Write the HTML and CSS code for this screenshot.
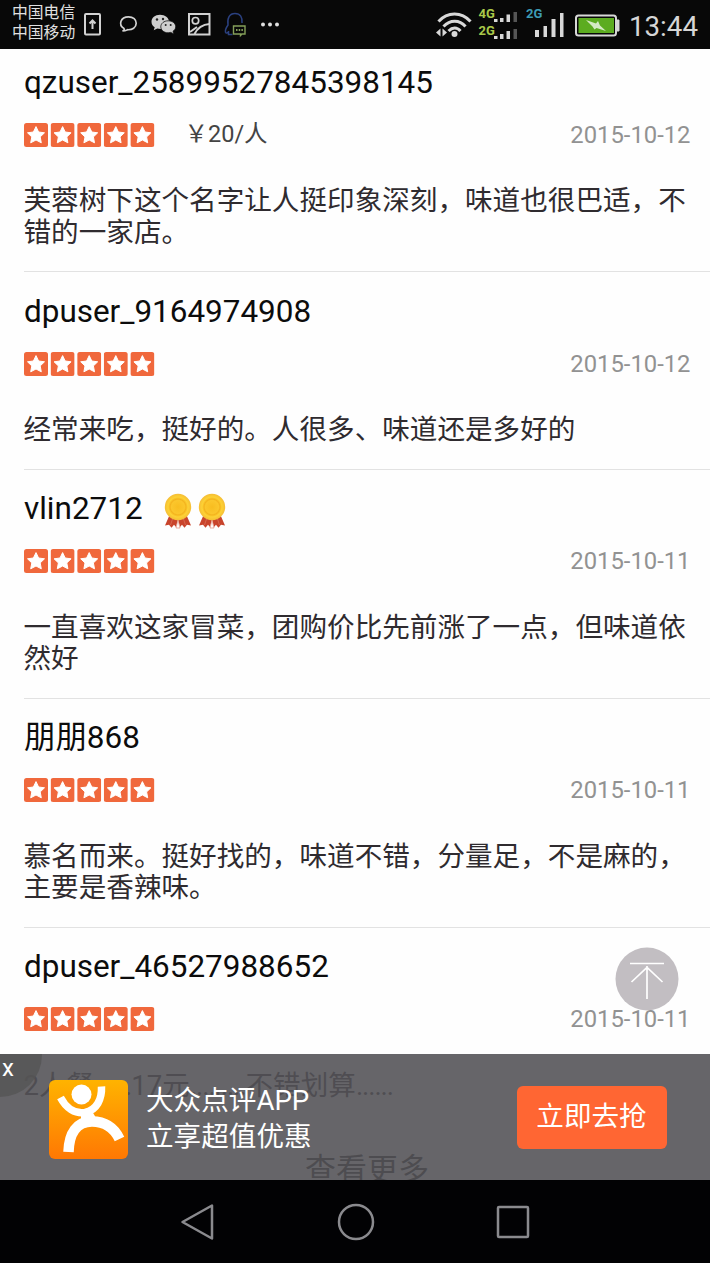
FILE: index.html
```html
<!DOCTYPE html>
<html lang="zh-CN">
<head>
<meta charset="utf-8">
<title>大众点评</title>
<link rel="stylesheet" href="styles.css">
</head>
<body>
<svg width="0" height="0" class="defs">
  <defs>
    <symbol id="star" viewBox="0 0 24 24"><rect width="24" height="24" rx="2.5" fill="#f0683c"/><path d="M12 3.6l2.6 5.4 5.9.8-4.3 4.1 1.1 5.900L12 17l-5.300 2.800 1.100-5.900-4.300-4.100 5.900-.8z" fill="#fff" stroke="#fff" stroke-width="1" stroke-linejoin="round"/></symbol>
    <symbol id="stars" viewBox="0 0 131 24">
      <use href="#star" x="0" width="24" height="24"/><use href="#star" x="26.6" width="24" height="24"/><use href="#star" x="53.2" width="24" height="24"/><use href="#star" x="79.8" width="24" height="24"/><use href="#star" x="106.4" width="24" height="24"/>
    </symbol>
    <radialGradient id="gold"><stop offset="0" stop-color="#f8bd20"/><stop offset=".5" stop-color="#fbc62c"/><stop offset=".6" stop-color="#f4b41e"/><stop offset=".75" stop-color="#fdd235"/><stop offset="1" stop-color="#f5bd35"/></radialGradient>
    <symbol id="medal" viewBox="0 0 28 36">
      <path d="M6 21L1 32.500l4-.8 2.500 3 2.500-3 2 2.300 2-8 2 8 2-2.300 2.500 3 2.500-3 4 .8L22 21z" fill="#c8442c"/>
      <path d="M14 27l-2 8h4zM8.500 26l-2 6M19.500 26l2 6" fill="#fefefe" stroke="#dd7a64" stroke-width=".6"/>
      <circle cx="14" cy="14" r="13.2" fill="url(#gold)"/>
    </symbol>
    <linearGradient id="orange" x2="0" y2="1"><stop offset="0" stop-color="#ffb300"/><stop offset="1" stop-color="#ff7803"/></linearGradient>
  </defs>
</svg>
<div class="phone">
  <header class="status">
    <div class="carriers"><div>中国电信</div><div>中国移动</div></div>
    <svg class="status-left" width="200" height="49" viewBox="80 0 200 49" fill="none" stroke="#d2d2d2" stroke-width="2">
      <rect x="85" y="14" width="15" height="20.5" rx="1"/><path d="M92.5 29v-8M89.500 23.500l3-3 3 3"/>
      <path d="M122.500 31c2-.7 2-1.300 1.500-2.500-6-3.500-3.500-11.700 4.500-11.700 4.800 0 7.700 3 7.700 6.500 0 4.200-4 6.700-8.500 6.400-1.700.8-3.200 1.300-5.200 1.300z" stroke-width="1.700"/>
      <g stroke="none"><path d="M160 14.800c-5 0-8.500 3-8.500 7 0 2.300 1.200 4.200 3.200 5.500l-1 3 3.600-1.700 3.300.5c4.700 0 8.400-3.300 8.400-7.300s-4-7-9-7z" fill="#cfcfcf"/><path d="M168.200 20.800c-4.300 0-7.400 2.700-7.400 6s3.100 6 7.400 6l2.600-.4 3 1.600-.8-2.700c1.700-1.100 2.700-2.700 2.700-4.500 0-3.300-3.200-6-7.500-6z" fill="#cfcfcf" stroke="#111" stroke-width=".8"/><g fill="#222"><circle cx="157" cy="19.500" r="1.200"/><circle cx="163" cy="19" r="1.200"/><circle cx="165.700" cy="25" r="1"/><circle cx="170.700" cy="25" r="1"/></g></g>
      <rect x="189" y="14" width="20.500" height="20.500"/><circle cx="195.500" cy="20.700" r="3.200" stroke-width="1.700"/><path d="M190 32l7-5M194.500 34c3-6 8-9.500 15-10"/>
      <path d="M229 31.500c-1.500 1.800-3 2-3.500.7-.5-2 1-5 2.500-7.200C227 18 229.500 13.500 235 13.500s7.500 4 7 9.500M228.500 31v3.500h4" stroke="#2b4180" stroke-width="1.500"/>
      <path d="M233.500 26h11.500v8h-3l-1.500 1.500v-1.500h-7z" stroke="#85a05a" stroke-width="1.400"/><path d="M236 30h7" stroke="#85a05a" stroke-dasharray="1.500 1.200"/>
      <g fill="#e0e0e0" stroke="none"><circle cx="263" cy="24.500" r="2"/><circle cx="270" cy="24.500" r="2"/><circle cx="277" cy="24.500" r="2"/></g>
    </svg>
    <svg class="status-right" width="190" height="49" viewBox="432 0 190 49" fill="none">
      <g stroke="#d8d8d8" stroke-width="3"><path d="M438.500 21.500c9-10 23-10 32 0M443.500 26.500c6.500-7 16-7 22 0M448.500 31c4-4 8.500-4 12 0"/></g><circle cx="454.500" cy="34" r="3" fill="#d8d8d8"/><path d="M440.500 28.500v8l-4.500-4zM442.500 28.500v8l4.500-4z" fill="#d8d8d8"/>
      <g class="net"><text x="478.500" y="17.500" fill="#a9c84a">4G</text><text x="478.500" y="34.700" fill="#a9c84a">2G</text><text x="526" y="17.500" fill="#3d9bb5">2G</text></g>
      <path d="M494 19h3.500v3H494zM500 18h3.500v4H500zM506.500 14.500h3.500V22h-3.500zM494 36h3.500v3H494zM500 34h3.500v5H500zM506.500 31h3.500v8h-3.500zM535 30h4v7h-4zM543.500 26h3.500v11h-3.500zM551.500 19h4v18h-4zM560 13h3.500v24H560z" fill="#d8d8d8"/><path d="M513.500 12h3.500v10h-3.500zM513.500 29h3.500v10h-3.500z" fill="#555"/>
      <rect x="576" y="15.500" width="40" height="20" rx="2.500" stroke="#d8d8d8" stroke-width="2"/><path d="M616.500 20h2.500v11h-2.500" fill="#d8d8d8" stroke="#d8d8d8"/><rect x="578.500" y="18" width="35.500" height="15" fill="#5cac20"/><path d="M586 20l10 3.500 2-2.500 2 4.500 6 5.500-9.500-3-2 1.500-2-3z" fill="#d5eac5"/>
    </svg>
    <span class="clock">13:44</span>
  </header>

  <main class="feed">
    <article class="review">
      <div class="who">qzuser_25899527845398145</div>
      <div class="meta"><svg class="stars"><use href="#stars"/></svg><span class="price">￥20/人</span><time>2015-10-12</time></div>
      <p>芙蓉树下这个名字让人挺印象深刻，味道也很巴适，不错的一家店。</p>
    </article>
    <article class="review">
      <div class="who">dpuser_9164974908</div>
      <div class="meta"><svg class="stars"><use href="#stars"/></svg><time>2015-10-12</time></div>
      <p>经常来吃，挺好的。人很多、味道还是多好的</p>
    </article>
    <article class="review">
      <div class="who">vlin2712<span class="medals"><svg><use href="#medal"/></svg><svg><use href="#medal"/></svg></span></div>
      <div class="meta"><svg class="stars"><use href="#stars"/></svg><time>2015-10-11</time></div>
      <p>一直喜欢这家冒菜，团购价比先前涨了一点，但味道依然好</p>
    </article>
    <article class="review">
      <div class="who">朋朋868</div>
      <div class="meta"><svg class="stars"><use href="#stars"/></svg><time>2015-10-11</time></div>
      <p>慕名而来。挺好找的，味道不错，分量足，不是麻的，主要是香辣味。</p>
    </article>
    <article class="review last">
      <div class="who">dpuser_46527988652</div>
      <div class="meta"><svg class="stars"><use href="#stars"/></svg><time>2015-10-11</time></div>
      <p>2人餐<span class="dots">......</span>17元<span class="dots">.........</span>不错划算<span class="dots">......</span></p>
    </article>
    <div class="more">查看更多</div>
  </main>

  <svg class="to-top" viewBox="0 0 64 64"><circle cx="32" cy="32" r="31.500" fill="#a39da3" fill-opacity=".66"/><path d="M15 16.500h34M32 19v33M16.500 35L32 20.500 47.500 35" fill="none" stroke="#fff" stroke-width="1.700"/></svg>

  <aside class="banner">
    <div class="corner"></div>
    <span class="close">x</span>
    <svg class="logo" viewBox="0 0 79 79"><rect width="79" height="79" rx="6" fill="url(#orange)"/><circle cx="32.500" cy="14.500" r="10" fill="#fff"/><path d="M11.500 17.500C17 28 26 34 36 32.500 48 30 53 19 52.500 6.500" fill="none" stroke="#fff" stroke-width="7.500"/><path d="M19.500 72C20 53 28 41.500 43 41.500c13 0 22 6 27.500 17.500" fill="none" stroke="#fff" stroke-width="10.500"/><path d="M32 34l11-3 4 7-15 3z" fill="#fff"/></svg>
    <div class="pitch"><div>大众点评APP</div><div>立享超值优惠</div></div>
    <div class="grab">立即去抢</div>
  </aside>

  <nav class="keys">
    <svg width="34" height="38" viewBox="0 0 34 38"><path d="M31 2.500v33L1.500 19z"/></svg>
    <svg width="38" height="38" viewBox="0 0 38 38"><circle cx="19" cy="19" r="17"/></svg>
    <svg width="34" height="34" viewBox="0 0 34 34"><rect x="2" y="2" width="30" height="30" rx="1"/></svg>
  </nav>
</div>
</body>
</html>
```

FILE: styles.css
```css
body {
  margin: 0;
  background: #fefefe;
  font-family: Roboto, "Noto Sans CJK SC", sans-serif;
}

.defs {
  position: absolute;
}

.phone {
  position: relative;
  display: flex;
  flex-direction: column;
  width: 710px;
  height: 1263px;
  overflow: hidden;
}

.status {
  z-index: 1;
  display: flex;
  flex: none;
  align-items: center;
  height: 49px;
  background: #080808;
  color: #e0e0e0;
}

.carriers {
  width: 68px;
  padding-left: 12px;
  margin-top: -3px;
  font-size: 15.8px;
  line-height: 20.5px;
  white-space: nowrap;
}

.status-right {
  margin-left: 152px;
}

.net {
  font-size: 13px;
  font-weight: 700;
}

.clock {
  margin-left: 7px;
  padding-top: 3px;
  font-size: 27.7px;
  color: #d6d6d6;
}

.feed {
  flex: 1;
  min-height: 0;
  margin-top: -5.5px;
  padding-left: 24px;
  overflow: hidden;
}

.review {
  box-sizing: border-box;
  padding: 20.2px 0 23.5px;
  border-bottom: 1px solid #e2e2e2;
}

.last {
  border-color: transparent;
}

.who {
  display: flex;
  align-items: center;
  height: 38px;
  font-size: 31.45px;
  line-height: 38px;
  color: #0c0c0c;
}

.medals {
  display: flex;
  gap: 6px;
  margin-left: 21px;
  padding-top: 3px;
}

.medals svg {
  width: 28px;
  height: 36px;
}

.meta {
  display: flex;
  align-items: center;
  height: 30px;
  margin-top: 18px;
  font-size: 23.8px;
  line-height: 30px;
}

.stars {
  width: 131px;
  height: 24px;
  margin-left: -.5px;
}

.price {
  height: 32px;
  margin-left: 30px;
  font-size: 23.5px;
  color: #444;
}

.meta time {
  margin-left: auto;
  padding-right: 19.5px;
  color: #929292;
}

.review p {
  margin: 35.8px 0 0 -.5px;
  padding-right: 20px;
  font-size: 27.6px;
  line-height: 31.25px;
  color: #2f2b2f;
}

.dots {
  letter-spacing: -1.1px;
}

.more {
  padding-top: 25px;
  font-size: 31px;
  line-height: 38px;
  text-align: center;
  color: #222;
}

.to-top {
  position: absolute;
  left: 615px;
  top: 947px;
  width: 64px;
  height: 64px;
}

.banner {
  position: absolute;
  left: 0;
  top: 1054px;
  display: flex;
  align-items: center;
  box-sizing: border-box;
  width: 710px;
  height: 126px;
  padding: 0 43.5px 0 49px;
  overflow: hidden;
  background: rgba(83, 82, 87, .89);
  color: #fff;
}

.corner {
  position: absolute;
  left: -42px;
  top: -41px;
  width: 84px;
  height: 84px;
  border-radius: 50%;
  background: rgba(85, 85, 85, .8);
}

.close {
  position: absolute;
  left: 2px;
  top: 0;
  font-size: 24px;
  line-height: 28px;
}

.logo {
  width: 79px;
  height: 79px;
  margin-top: 4px;
}

.pitch {
  margin-left: 18px;
  padding-top: 3px;
  font-size: 27.6px;
  line-height: 36px;
}

.grab {
  width: 150px;
  height: 63px;
  margin-left: auto;
  border-radius: 6px;
  background: #ff6633;
  font-size: 27.6px;
  line-height: 61px;
  text-align: center;
}

.keys {
  display: flex;
  flex: none;
  align-items: center;
  justify-content: space-between;
  box-sizing: border-box;
  height: 83px;
  padding: 1px 180px 0 181px;
  background: #020204;
}

.keys svg {
  fill: none;
  stroke: #8a8a8e;
  stroke-width: 2.5;
  stroke-linejoin: round;
}
```
